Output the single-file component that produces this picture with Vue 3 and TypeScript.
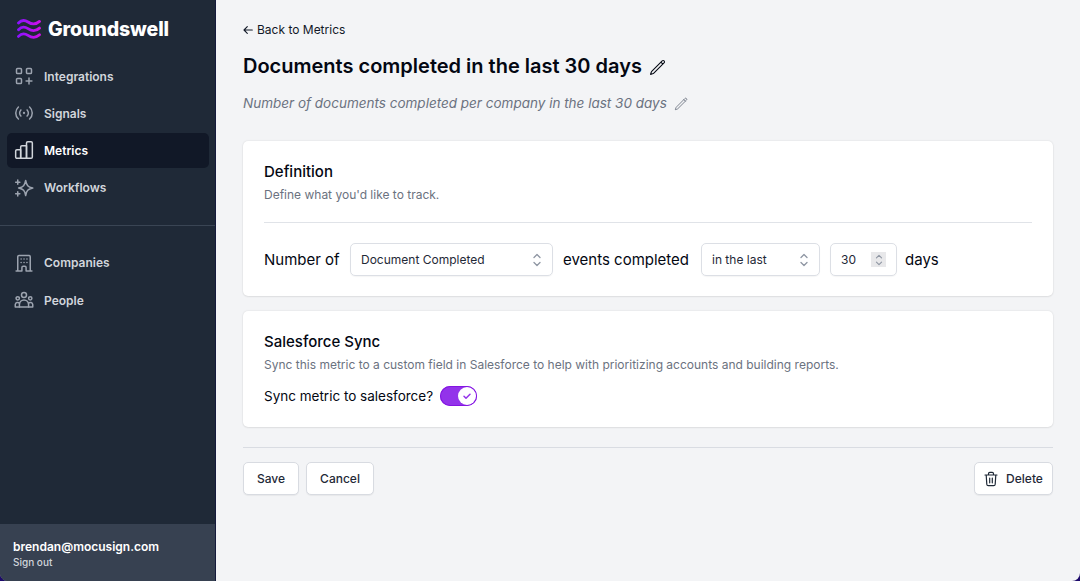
<script setup lang="ts">
import { ref } from 'vue'

interface NavItem {
  label: string
  icon: 'apps' | 'signal' | 'bars' | 'sparkle' | 'building' | 'people'
}

const primary: NavItem[] = [
  { label: 'Integrations', icon: 'apps' },
  { label: 'Signals', icon: 'signal' },
  { label: 'Metrics', icon: 'bars' },
  { label: 'Workflows', icon: 'sparkle' },
]
const secondary: NavItem[] = [
  { label: 'Companies', icon: 'building' },
  { label: 'People', icon: 'people' },
]
const groups: NavItem[][] = [primary, secondary]
const active = ref('Metrics')
const synced = ref(true)

const icons: Record<NavItem['icon'], string[]> = {
  apps: [
    'M4.3 3h3.4a1.3 1.3 0 0 1 1.3 1.3v3.4a1.3 1.3 0 0 1-1.3 1.3H4.3A1.3 1.3 0 0 1 3 7.700V4.300A1.300 1.300 0 0 1 4.300 3z',
    'M16.300 3h3.400a1.300 1.300 0 0 1 1.300 1.300v3.400a1.300 1.300 0 0 1-1.300 1.300h-3.400a1.300 1.300 0 0 1-1.300-1.300V4.300a1.300 1.300 0 0 1 1.300-1.300z',
    'M4.300 15h3.400a1.300 1.300 0 0 1 1.300 1.300v3.400a1.300 1.300 0 0 1-1.300 1.300H4.300A1.300 1.300 0 0 1 3 19.700v-3.400A1.300 1.300 0 0 1 4.300 15z',
    'M18 14.500v7M14.500 18h7',
  ],
  signal: [
    'M5.300 19.200a9.700 9.700 0 0 1 0-14.400M18.700 4.800a9.700 9.700 0 0 1 0 14.400M8.300 15.700a5.200 5.200 0 0 1 0-7.400M15.700 8.300a5.200 5.200 0 0 1 0 7.400',
    'M12 11.500a.5.5 0 1 1 0 1 .5.5 0 0 1 0-1z',
  ],
  bars: [
    'M2 13.300a1.500 1.500 0 0 1 1.500-1.500H8V22H3.500A1.500 1.500 0 0 1 2 20.500z',
    'M8 8.500A1.500 1.500 0 0 1 9.500 7H15v15H8z',
    'M15 3.500A1.500 1.500 0 0 1 16.500 2h4A1.500 1.500 0 0 1 22 3.500v17a1.500 1.500 0 0 1-1.500 1.500H15z',
  ],
  sparkle: [
    'M14 3c1.200 6 2.500 7.700 8.500 9-6 1.300-7.300 3-8.500 9-1.200-6-2.500-7.700-8.500-9 6-1.300 7.300-3 8.500-9z',
    'M4.500 2.500v5M2 5h5M4.500 16.500v5M2 19h5',
  ],
  building: [
    'M4.500 21V4.500A1.500 1.500 0 0 1 6 3h12a1.500 1.500 0 0 1 1.500 1.500V21M2.500 21.500h7v-4A1.500 1.500 0 0 1 11 16h2a1.500 1.500 0 0 1 1.500 1.500v4h7',
    'M8.500 7.200h.1M12 7.200h.1M15.500 7.200h.1M8.500 11.500h.1M12 11.500h.1M15.500 11.500h.1',
  ],
  people: [
    'M12 3a3 3 0 1 1 0 6 3 3 0 0 1 0-6z',
    'M4.500 8a2 2 0 1 1 0 4 2 2 0 0 1 0-4zM19.500 8a2 2 0 1 1 0 4 2 2 0 0 1 0-4z',
    'M6.500 20.500v-3a5.500 5.500 0 0 1 11 0v3z',
    'M6.500 20.500H1.500v-3a2.800 2.800 0 0 1 5-1.500M17.500 20.500h5v-3a2.800 2.800 0 0 0-5-1.500',
  ],
}
</script>

<template>
  <div class="app">
    <aside class="sidebar">
      <div class="brand">
        <svg class="waves" viewBox="0 0 24 20" fill="none">
          <defs>
            <linearGradient id="wave" gradientUnits="userSpaceOnUse" x1="1" y1="0" x2="23" y2="0">
              <stop offset="0" stop-color="#8a12ff" />
              <stop offset="1" stop-color="#d010e8" />
            </linearGradient>
          </defs>
          <path
            v-for="y in [3, 9.7, 16.4]"
            :key="y"
            :d="`M1.5 ${y + 1}C4.500 ${y - 2.300} 7.500 ${y - 2.300} 11 ${y}S18.500 ${y + 3} 22.500 ${y - 0.600}`"
            stroke="url(#wave)"
          />
        </svg>
        <span class="wordmark">Groundswell</span>
      </div>
      <nav v-for="(items, i) in groups" :key="i" class="nav">
        <a v-for="item in items" :key="item.label" class="link" :class="{ active: item.label === active }" @click="active = item.label">
          <svg class="nav-icon" :class="item.icon" viewBox="0 0 24 24"><path v-for="d in icons[item.icon]" :key="d" :d="d" /></svg>
          <span>{{ item.label }}</span>
        </a>
      </nav>
      <footer class="account">
        <div class="email">brendan@mocusign.com</div>
        <div class="signout">Sign out</div>
      </footer>
    </aside>

    <main class="main">
      <a class="back">
        <svg viewBox="0 0 10 10"><path d="M9.300 5H1M4.300 1.700 1 5l3.300 3.300" /></svg>
        <span>Back to Metrics</span>
      </a>
      <h1 class="title">
        <span>Documents completed in the last 30 days</span>
        <svg class="pencil" viewBox="0 0 24 24"><path d="m16.860 4.490 1.690-1.690a1.880 1.880 0 1 1 2.650 2.650L6.830 19.820a4.500 4.500 0 0 1-1.900 1.130l-2.680.8.800-2.690a4.500 4.500 0 0 1 1.130-1.890zM16.860 4.490 19.500 7.130" /></svg>
      </h1>
      <p class="subtitle">
        <span>Number of documents completed per company in the last 30 days</span>
        <svg class="pencil" viewBox="0 0 24 24"><path d="m16.860 4.490 1.690-1.690a1.880 1.880 0 1 1 2.650 2.650L6.830 19.820a4.500 4.500 0 0 1-1.900 1.130l-2.680.8.800-2.690a4.500 4.500 0 0 1 1.130-1.890zM16.860 4.490 19.500 7.130" /></svg>
      </p>

      <section class="card definition">
        <h2>Definition</h2>
        <p class="hint">Define what you'd like to track.</p>
        <div class="rule"></div>
        <div class="sentence">
          <span class="word number-of">Number of</span>
          <div class="field event">
            <span>Document Completed</span>
            <svg class="chev" viewBox="0 0 10 14"><path d="M2 4.500 5 1.500l3 3M2 9.500l3 3 3-3" /></svg>
          </div>
          <span class="word events">events completed</span>
          <div class="field period">
            <span>in the last</span>
            <svg class="chev" viewBox="0 0 10 14"><path d="M2 4.500 5 1.500l3 3M2 9.500l3 3 3-3" /></svg>
          </div>
          <div class="field count">
            <span>30</span>
            <span class="spin"><svg class="chev" viewBox="0 0 10 14"><path d="M2 4.500 5 1.500l3 3M2 9.500l3 3 3-3" /></svg></span>
          </div>
          <span class="word">days</span>
        </div>
      </section>

      <section class="card sync">
        <h2>Salesforce Sync</h2>
        <p class="hint">Sync this metric to a custom field in Salesforce to help with prioritizing accounts and building reports.</p>
        <div class="toggle-row">
          <span>Sync metric to salesforce?</span>
          <button class="toggle" :class="{ on: synced }" aria-label="Sync metric to salesforce" @click="synced = !synced">
            <span class="knob"><svg viewBox="0 0 10 10"><path d="m2 5.200 2 2 4-4" /></svg></span>
          </button>
        </div>
      </section>

      <div class="actions">
        <button class="btn save">Save</button>
        <button class="btn cancel">Cancel</button>
        <button class="btn delete">
          <svg viewBox="0 0 14 16"><path d="M1 4h12M2.200 4l.6 9.200A1.500 1.500 0 0 0 4.300 14.600h5.400a1.500 1.500 0 0 0 1.500-1.400L11.800 4M4.500 4V2.700A1.300 1.300 0 0 1 5.800 1.400h2.400a1.300 1.300 0 0 1 1.300 1.300V4M5.700 7v4.800M8.300 7v4.800" /></svg>
          <span>Delete</span>
        </button>
      </div>
    </main>
  </div>
</template>

<style>
body {
  background: #1d0a6b;
}
</style>

<style scoped>
* {
  box-sizing: border-box;
}
.app {
  display: flex;
  height: 581px;
  overflow: hidden;
  border-radius: 0 0 8px 8px;
  background: #f3f4f6;
  color: #030712;
  font-family: Inter, sans-serif;
  font-size: 12px;
}
svg {
  display: block;
  flex: none;
  fill: none;
  stroke: currentColor;
  stroke-width: 1.5;
  stroke-linecap: round;
  stroke-linejoin: round;
}
h1, h2, p {
  margin: 0;
}
.sidebar {
  width: 216px;
  flex: none;
  display: flex;
  flex-direction: column;
  background: #1f2937;
  border-right: 1px solid #151a3c;
}
.brand {
  height: 59px;
  padding: 0 0 1px 17px;
  display: flex;
  align-items: center;
  gap: 7px;
}
.waves {
  width: 24px;
  height: 20px;
  stroke-width: 2.8;
}
.wordmark {
  color: #fff;
  font-weight: 800;
  font-size: 19.500px;
  letter-spacing: -0.1px;
}
.nav {
  display: flex;
  flex-direction: column;
  gap: 3px;
  padding: 0 6px 0 7px;
}
.nav + .nav {
  margin-top: 20px;
  padding-top: 20px;
  border-top: 1px solid #3a4554;
}
.link {
  height: 34.200px;
  padding-left: 7px;
  border-radius: 5px;
  display: flex;
  align-items: center;
  gap: 10px;
  color: #d1d5db;
  font-weight: 600;
  font-size: 12px;
}
.link.active {
  background: #111827;
  color: #fff;
}
.nav-icon {
  width: 20px;
  height: 20px;
  color: #9ca3af;
  stroke-width: 1.8;
}
.active .nav-icon {
  color: #d1d5db;
}
.account {
  margin-top: auto;
  height: 57px;
  padding: 15px 13px 0;
  background: #374151;
}
.email {
  color: #fff;
  font-size: 12px;
  font-weight: 600;
  line-height: 16px;
}
.signout {
  color: #d1d5db;
  font-size: 10px;
  font-weight: 500;
  line-height: 14px;
}
.main {
  flex: 1;
  min-width: 0;
  padding: 21px 27px 0;
  display: flex;
  flex-direction: column;
}
.back {
  height: 17px;
  display: flex;
  align-items: center;
  gap: 4px;
  color: #111827;
  font-size: 12px;
}
.back svg {
  width: 10px;
  height: 10px;
  stroke-width: 1.1;
}
.title {
  margin-top: 14px;
  height: 28px;
  display: flex;
  align-items: center;
  gap: 7px;
  font-weight: 600;
  font-size: 20px;
  white-space: nowrap;
}
.title .pencil {
  width: 17px;
  height: 17px;
  margin-top: 3px;
}
.subtitle {
  margin-top: 13px;
  height: 20px;
  display: flex;
  align-items: center;
  gap: 7px;
  color: #6b7280;
  font-style: italic;
  font-size: 13.500px;
  white-space: nowrap;
}
.subtitle .pencil {
  width: 14px;
  height: 14px;
  margin-top: 2px;
}
.card {
  padding: 21px;
  border-radius: 5px;
  background: #fff;
  box-shadow: 0 0 2px rgb(0 0 0 / 12%), 0 1px 2px rgb(0 0 0 / 6%);
}
.definition {
  height: 155px;
  margin-top: 28px;
}
.sync {
  height: 116px;
  margin-top: 15px;
}
h2 {
  font-weight: 500;
  font-size: 15px;
  line-height: 20px;
}
.hint {
  margin-top: 4px;
  color: #6b7280;
  font-size: 12px;
  line-height: 17px;
  white-space: nowrap;
}
.rule {
  height: 1px;
  margin: 19px 0 20px;
  background: #e0e3e8;
}
.sentence {
  display: flex;
  align-items: center;
  white-space: nowrap;
  font-size: 15px;
}
.number-of {
  width: 86px;
}
.events {
  width: 138px;
}
.field {
  height: 33px;
  display: flex;
  align-items: center;
  justify-content: space-between;
  padding: 0 10px;
  border: 1px solid #dcdfe5;
  border-radius: 5px;
  box-shadow: 0 1px 1px rgb(0 0 0 / 4%);
  color: #1f2937;
  font-size: 12px;
}
.chev {
  width: 10px;
  height: 14px;
  color: #8f96a3;
  stroke-width: 1.3;
}
.event {
  width: 203px;
  margin-right: 10px;
}
.period {
  width: 119px;
  margin-right: 10px;
}
.count {
  width: 67px;
  margin-right: 8px;
}
.spin {
  width: 15px;
  height: 15px;
  display: grid;
  place-items: center;
  background: #e8e8ea;
}
.spin .chev {
  height: 12px;
}
.toggle-row {
  display: flex;
  align-items: center;
  gap: 7px;
  margin-top: 12px;
  height: 22px;
  font-size: 13.500px;
}
.toggle {
  width: 37px;
  height: 20px;
  padding: 1px;
  border: 0;
  border-radius: 10px;
  display: flex;
  align-items: center;
  background: #d1d5db;
}
.toggle.on {
  justify-content: flex-end;
  background: #9333ea;
  box-shadow: inset 0 0 0 1px #8414e2;
}
.knob {
  width: 18px;
  height: 18px;
  border-radius: 50%;
  display: grid;
  place-items: center;
  background: #fff;
  color: #9333ea;
}
.knob svg {
  width: 10px;
  height: 10px;
}
.actions {
  display: flex;
  gap: 7px;
  margin-top: 20px;
  padding-top: 14px;
  border-top: 1px solid #d9dce2;
}
.btn {
  height: 33px;
  padding: 0;
  display: flex;
  align-items: center;
  justify-content: center;
  border: 1px solid #d8dbe1;
  border-radius: 5px;
  background: #fff;
  box-shadow: 0 1px 1px rgb(0 0 0 / 5%);
  color: #1f2937;
  font: 500 12px Inter, sans-serif;
}
.save {
  width: 56px;
}
.cancel {
  width: 68px;
}
.delete {
  width: 79px;
  margin-left: auto;
  gap: 8px;
}
.delete svg {
  width: 14px;
  height: 16px;
  stroke-width: 1.2;
}
</style>
